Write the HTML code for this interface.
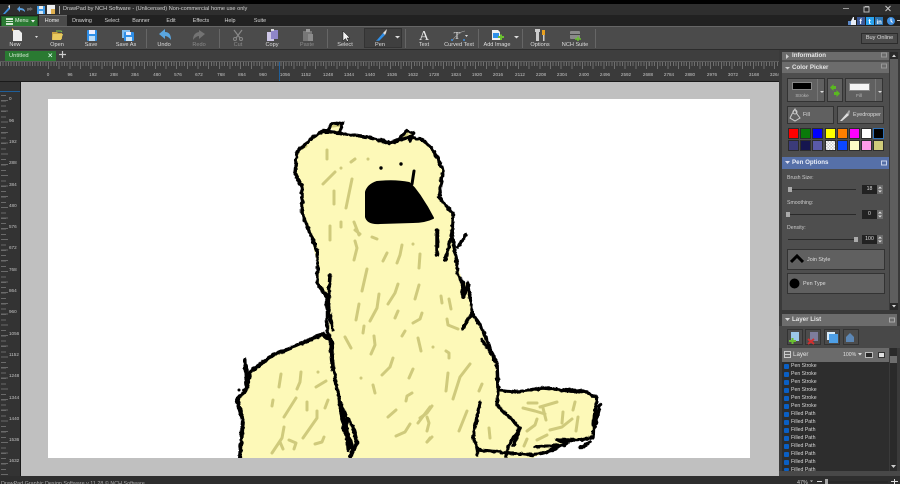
<!DOCTYPE html>
<html><head><meta charset="utf-8"><title>DrawPad</title>
<style>
html,body{margin:0;padding:0;background:#3a3a3a}
#a{position:relative;width:900px;height:484px;overflow:hidden;background:#3a3a3a;font-family:"Liberation Sans",sans-serif;color:#ddd;filter:blur(.25px)}
#a div,#a span,#a svg{position:absolute}
.c{transform:translateX(-50%);white-space:nowrap;line-height:8px;height:8px}
.n{white-space:nowrap;line-height:8px;height:8px}
.m{font-size:5.4px;top:17px;color:#d5d5d5}
.l{font-size:5.6px;top:41px;color:#ddd}
.d{color:#8a8a8a}
.r{font-size:4.6px;top:71px;color:#c4c4c4}
.v{font-size:4.6px;left:9px;color:#c4c4c4}
.sep{top:29px;width:1px;height:19px;background:#666}
.h{left:782px;width:107px;background:#6c6c6c;color:#e4e4e4;font-weight:bold;font-size:6.2px}
.h b{position:absolute;left:10px;top:2px;line-height:8px;white-space:nowrap}
.btn{background:#606060;border:1px solid #333;box-sizing:border-box}
.sw{width:9px;height:9px;border:1px solid #2c2c2c}
.cb{left:784px;width:5px;height:5px;background:#0a5fc4;border-radius:1px}
.rw{left:791px;font-size:5.2px;color:#d8d8d8}
.box{left:862px;width:15px;height:9px;background:#222;color:#ddd;font-size:5.2px;text-align:center;line-height:9px}
.sp{left:877px;width:6px;height:9px;background:#6a6a6a}
.lb{left:787px;font-size:5.2px;color:#ccc}
.tr{left:788px;width:68px;height:1px;background:#2a2a2a}
.th{width:4px;height:5px;background:#aaa}
.ic{width:16px;height:16px;top:329px;background:#4c4c4c;border:1px solid #333;box-sizing:border-box}
</style></head><body><div id="a">

<!-- title -->
<div style="left:0;top:0;width:900px;height:4px;background:#000"></div>
<div style="left:0;top:4px;width:900px;height:11px;background:#2e2e2e"></div>
<div style="left:0;top:15px;width:900px;height:11px;background:#212121"></div>
<svg style="left:0;top:4px" width="62" height="11" viewBox="0 0 62 11">
<path d="M3 10 L9 3 L10 5 L5 10Z" fill="#3f8fe0"/><path d="M8 2 L10 1 L10 5Z" fill="#ddd"/>
<path d="M17 5 L20 2 L20 4 Q25 4 25 8 Q23 6 20 6 L20 8Z" fill="#5aa0e0"/>
<path d="M33 5 L30 3 L30 4 L27 4 L27 7 L30 6 L30 7Z" fill="#666"/>
<rect x="37" y="2" width="8" height="8" fill="#3f9be8"/><rect x="39" y="2" width="4" height="3" fill="#eee"/><rect x="39" y="7" width="4" height="3" fill="#cfe4f7"/>
<rect x="47" y="1" width="8" height="9" fill="#eee"/><rect x="51" y="5" width="4" height="5" fill="#e0b050"/>
<rect x="59" y="2" width="1" height="8" fill="#aaa"/>
</svg>
<div class="n" style="left:63px;top:5px;font-size:5.6px;color:#d0d0d0;line-height:9px;height:9px">DrawPad by NCH Software - (Unlicensed) Non-commercial home use only</div>
<svg style="left:838px;top:4px" width="62" height="11" viewBox="0 0 62 11">
<rect x="5" y="4" width="6" height="1" fill="#999"/><rect x="26" y="3" width="5" height="5" fill="none" stroke="#bbb"/><rect x="27" y="2" width="4" height="1" fill="#bbb"/>
<path d="M47.500 2 L52.500 7 M52.500 2 L47.500 7" stroke="#ccc" stroke-width="1"/></svg>

<!-- menu -->
<div style="left:1px;top:16px;width:37px;height:11px;background:#2a7a32;border:1px solid #1f5a25;box-sizing:border-box"></div>
<svg style="left:6px;top:18px" width="7" height="7"><rect width="7" height="7" fill="#cfe8cf"/><path d="M0 2.500H7M0 4.500H7" stroke="#2a7a32"/></svg>
<div class="n" style="left:15px;top:17px;font-size:5.400px;color:#e6f2e6">Menu</div>
<svg style="left:31px;top:20px" width="4" height="3"><path d="M0 0H4L2 2.500Z" fill="#eee"/></svg>
<div style="left:39px;top:15px;width:28px;height:12px;background:#4b4b4b;border-top:1px solid #6a6a6a;box-sizing:border-box"></div>
<div class="c m" style="left:52px;color:#eee">Home</div>
<div class="c m" style="left:82px">Drawing</div>
<div class="c m" style="left:112px">Select</div>
<div class="c m" style="left:141px">Banner</div>
<div class="c m" style="left:171px">Edit</div>
<div class="c m" style="left:201px">Effects</div>
<div class="c m" style="left:230px">Help</div>
<div class="c m" style="left:260px">Suite</div>
<svg style="left:846px;top:15px" width="54" height="11" viewBox="0 0 54 11">
<rect x="2" y="6" width="5" height="4" fill="#5b88c9"/><path d="M5 10V6L7 2H8V5H10V10Z" fill="#e8eef8"/>
<rect x="11" y="2" width="8" height="8" fill="#3b5998"/><rect x="20" y="2" width="8" height="8" fill="#2aa3ef"/><rect x="29" y="2" width="8" height="8" fill="#2a74b3"/>
<text x="13.500" y="9" font-size="7" fill="#fff" font-family="Liberation Sans" font-weight="bold">f</text>
<text x="22.500" y="9" font-size="7" fill="#fff" font-family="Liberation Sans" font-weight="bold">t</text>
<text x="30.500" y="9" font-size="6" fill="#fff" font-family="Liberation Sans" font-weight="bold">in</text>
<circle cx="45" cy="6" r="4" fill="#3f8fe0"/><path d="M45 3.500V6L46.500 7.500" stroke="#fff" fill="none"/><rect x="51" y="5" width="3" height="1" fill="#ccc"/></svg>

<!-- toolbar -->
<div style="left:0;top:26px;width:900px;height:1px;background:#666"></div>
<div style="left:0;top:27px;width:900px;height:23px;background:#4b4b4b"></div>
<div style="left:0;top:49px;width:900px;height:1px;background:#2c2c2c"></div>
<div style="left:364px;top:28px;width:38px;height:20px;background:#3f3f3f;border:1px solid #333;box-sizing:border-box"></div>
<div class="sep" style="left:146px"></div><div class="sep" style="left:219px"></div><div class="sep" style="left:327px"></div><div class="sep" style="left:405px"></div><div class="sep" style="left:478px"></div><div class="sep" style="left:522px"></div><div class="sep" style="left:595px"></div>
<svg style="left:0;top:27px" width="600" height="15" viewBox="0 0 600 15">
<path d="M13 3H19L22 6V14H13Z" fill="#eee"/><path d="M12 1L14 3L12 4Z" fill="#e8b850"/><path d="M35 9H38L36.500 11Z" fill="#ddd"/>
<path d="M52 5H57L58 6H62V12H52Z" fill="#c8a440"/><path d="M53 7H63L61 13H52Z" fill="#e8cb60"/><path d="M56 4H61L62 5" stroke="#7cc04a" fill="none"/>
<rect x="87" y="3" width="10" height="11" rx="1" fill="#2f8fe8"/><rect x="89" y="3" width="6" height="4" fill="#eef"/><rect x="89" y="9" width="6" height="5" fill="#bcdcf8"/>
<rect x="122" y="3" width="8" height="8" fill="#7fbdf0"/><rect x="124" y="5" width="10" height="9" rx="1" fill="#2f8fe8"/><rect x="126" y="5" width="5" height="3" fill="#eef"/><rect x="126" y="10" width="6" height="4" fill="#d0e8fb"/>
<path d="M159 7L165 2V5Q171 5 171 13Q168 9 165 9V12Z" fill="#5aa6e0"/>
<path d="M205 7L199 3V5Q193 6 193 13Q196 9 199 9V12Z" fill="#737373"/>
<path d="M234 3L240 11M242 3L236 11" stroke="#888" stroke-width="1.200"/><circle cx="235" cy="12" r="1.500" fill="none" stroke="#888"/><circle cx="241" cy="12" r="1.500" fill="none" stroke="#888"/>
<rect x="267" y="5" width="7" height="9" fill="#cfc8e8"/><rect x="271" y="3" width="7" height="9" fill="#8f86c9"/><rect x="271" y="2" width="3" height="2" fill="#ddd"/>
<rect x="303" y="4" width="9" height="10" fill="#777"/><rect x="306" y="2" width="4" height="3" fill="#999"/><rect x="308" y="7" width="5" height="7" fill="#8c8c8c"/>
<path d="M343 4V14L345.500 11.500L347 14.500L348.500 13.500L347 11H350Z" fill="#f2f2f2" stroke="#111" stroke-width=".5"/>
<path d="M377 13L383 6L385 8L379 14Z" fill="#2f8fe8"/><path d="M383 6L386 3L387 2L386 6L385 8Z" fill="#ddd"/><path d="M376 14L377 13L378 14Z" fill="#2f8fe8"/>
<text x="424" y="13" text-anchor="middle" font-family="Liberation Serif" font-size="14" fill="#e8e8e8">A</text>
<text x="457" y="12" text-anchor="middle" font-family="Liberation Serif" font-size="11" fill="#ddd">T</text><path d="M452 14Q458 5 465 4" stroke="#aaa" fill="none" stroke-width=".6"/><circle cx="452" cy="13" r="1" fill="#3f8fe0"/><circle cx="464" cy="13" r="1" fill="#3f8fe0"/><path d="M465 8H468L466.500 10Z" fill="#ddd"/>
<path d="M492 3H498L500 5V13H492Z" fill="#f0f0f0"/><rect x="493" y="6" width="6" height="5" fill="#2f8fe8"/><path d="M498 10H504M501 7.500V13" stroke="#6ac030" stroke-width="2"/>
<rect x="536" y="3" width="3" height="11" fill="#ccc"/><rect x="535" y="2" width="5" height="3" fill="#ccc"/><rect x="542" y="3" width="3" height="5" fill="#e8a020"/><rect x="543" y="8" width="1.500" height="6" fill="#ccc"/>
<rect x="570" y="4" width="10" height="8" rx="1" fill="#8a8a8a"/><rect x="570" y="7" width="10" height="1" fill="#444"/><path d="M575 12H581M578 9.500V14" stroke="#6ac030" stroke-width="1.500"/>
</svg>
<svg style="left:395px;top:36px" width="5" height="3"><path d="M0 0H5L2.500 2.500Z" fill="#ddd"/></svg>
<svg style="left:514px;top:36px" width="5" height="3"><path d="M0 0H5L2.500 2.500Z" fill="#ddd"/></svg>
<div class="c l" style="left:15px">New</div><div class="c l" style="left:57px">Open</div><div class="c l" style="left:91px">Save</div><div class="c l" style="left:126px">Save As</div><div class="c l" style="left:164px">Undo</div><div class="c l d" style="left:199px">Redo</div><div class="c l d" style="left:238px">Cut</div><div class="c l" style="left:272px">Copy</div><div class="c l d" style="left:307px">Paste</div><div class="c l" style="left:345px">Select</div><div class="c l" style="left:380px">Pen</div><div class="c l" style="left:424px">Text</div><div class="c l" style="left:459px">Curved Text</div><div class="c l" style="left:497px">Add Image</div><div class="c l" style="left:540px">Options</div><div class="c l" style="left:575px">NCH Suite</div>
<div class="btn" style="left:861px;top:33px;width:37px;height:11px;background:#4b4b4b;border-color:#2c2c2c;font-size:5.600px;text-align:center;line-height:9px;color:#ddd">Buy Online</div>

<!-- doc tabs -->
<div style="left:0;top:50px;width:779px;height:11px;background:#3e3e3e"></div>
<div style="left:5px;top:51px;width:51px;height:10px;background:#2a7a32"></div>
<div class="n" style="left:9px;top:51.500px;font-size:5.800px;color:#cfe6cf">Untitled</div>
<svg style="left:48px;top:53px" width="5" height="5"><path d="M.5 .5L4 4M4 .5L.5 4" stroke="#dfe" stroke-width=".8"/></svg>
<svg style="left:59px;top:51px" width="7" height="7"><path d="M3.500 0V7M0 3.500H7" stroke="#ccc" stroke-width="1.200"/></svg>

<!-- rulers -->
<div style="left:0;top:61px;width:779px;height:20px;background:#3a3a3a;border-top:1px solid #5c5c5c;box-sizing:border-box"></div>
<div style="left:0;top:81px;width:779px;height:1px;background:#1a1a1a"></div>
<div style="left:48px;top:62px;width:731px;height:4px;background:repeating-linear-gradient(90deg,#6e6e6e 0 1px,transparent 1px 2.670px)"></div>
<div style="left:48px;top:66px;width:731px;height:3px;background:repeating-linear-gradient(90deg,#6e6e6e 0 1px,transparent 1px 10.680px)"></div>
<div style="left:0;top:62px;width:48px;height:4px;background:repeating-linear-gradient(90deg,#6e6e6e 0 1px,transparent 1px 2.670px)"></div>
<div style="left:279px;top:62px;width:1px;height:19px;background:#1f5f9a"></div>
<div class="c r" style="left:48px">0</div><div class="c r" style="left:70px">96</div><div class="c r" style="left:93px">192</div><div class="c r" style="left:114px">288</div><div class="c r" style="left:135px">384</div><div class="c r" style="left:157px">480</div><div class="c r" style="left:178px">576</div><div class="c r" style="left:199px">672</div><div class="c r" style="left:221px">768</div><div class="c r" style="left:242px">864</div><div class="c r" style="left:263px">960</div><div class="c r" style="left:285px">1056</div><div class="c r" style="left:306px">1152</div><div class="c r" style="left:328px">1248</div><div class="c r" style="left:349px">1344</div><div class="c r" style="left:370px">1440</div><div class="c r" style="left:392px">1536</div><div class="c r" style="left:413px">1632</div><div class="c r" style="left:434px">1728</div><div class="c r" style="left:456px">1824</div><div class="c r" style="left:477px">1920</div><div class="c r" style="left:498px">2016</div><div class="c r" style="left:520px">2112</div><div class="c r" style="left:541px">2208</div><div class="c r" style="left:562px">2304</div><div class="c r" style="left:584px">2400</div><div class="c r" style="left:605px">2496</div><div class="c r" style="left:626px">2592</div><div class="c r" style="left:648px">2688</div><div class="c r" style="left:669px">2784</div><div class="c r" style="left:690px">2880</div><div class="c r" style="left:712px">2976</div><div class="c r" style="left:733px">3072</div><div class="c r" style="left:754px">3168</div><div class="c r" style="left:775px">3264</div>

<div style="left:0;top:82px;width:20px;height:394px;background:#333"></div>
<div style="left:20px;top:82px;width:1px;height:394px;background:#1a1a1a"></div>
<div style="left:1px;top:95px;width:5px;height:381px;background:repeating-linear-gradient(180deg,#6a6a6a 0 1px,transparent 1px 5.340px)"></div>
<div style="left:1px;top:100px;width:7px;height:376px;background:repeating-linear-gradient(180deg,#6a6a6a 0 1px,transparent 1px 10.680px)"></div>
<div style="left:0;top:91px;width:20px;height:1px;background:#1f5f9a"></div>
<div class="v" style="top:96px">0</div><div class="v" style="top:118px">96</div><div class="v" style="top:139px">192</div><div class="v" style="top:160px">288</div><div class="v" style="top:182px">384</div><div class="v" style="top:203px">480</div><div class="v" style="top:224px">576</div><div class="v" style="top:245px">672</div><div class="v" style="top:267px">768</div><div class="v" style="top:288px">864</div><div class="v" style="top:309px">960</div><div class="v" style="top:331px">1056</div><div class="v" style="top:352px">1152</div><div class="v" style="top:373px">1248</div><div class="v" style="top:395px">1344</div><div class="v" style="top:416px">1440</div><div class="v" style="top:437px">1536</div><div class="v" style="top:458px">1632</div>

<!-- canvas -->
<div style="left:21px;top:82px;width:758px;height:394px;background:#c0c0c0"></div>
<div style="left:48px;top:99px;width:702px;height:359px;background:#fff"></div>

<svg style="left:48px;top:99px" width="702" height="359" viewBox="48 99 702 359" fill="none" stroke-linecap="round" stroke-linejoin="round">
<defs><filter id="j" filterUnits="userSpaceOnUse" x="48" y="99" width="702" height="359"><feTurbulence type="fractalNoise" baseFrequency=".22" numOctaves="2" seed="4"/><feDisplacementMap in="SourceGraphic" scale="3.500" xChannelSelector="R" yChannelSelector="G"/></filter></defs>
<path fill="#fdf9b8" d="M297 152L313 137L323 131L340 133L367 137L390 143L410 137L423 140L437 157L443 170L440 197L453 213L452 233L457 263L463 283L468 283L472 313L483 330L497 363L498 390L517 392L543 388L587 392L597 398L593 437L580 440L567 443L547 452L533 458L240 458L243 420L237 400L247 388L250 372L273 355L293 347L323 334L330 338L327 300L317 283L318 267L310 233L302 213L302 187L295 173Z"/>
<path fill="#fdf9b8" d="M328 128L333 123L343 123L340 133ZM395 142L407 131L413 133L410 140Z"/>
<g stroke="#cfca7c" stroke-width="3">
<path d="M327 150V159M351 162L355 159M368 159V159.100M323 184L335 172M341 168V168.100M352 179L346 208M334 191V204M330 226V240M341 222V227M354 222L359 235M372 237L377 239M355 230L360 234"/>
<path d="M355 241L357 248L354 260M387 253L383 261M402 245L400 255L397 263M413 244V244.100M420 254L419 268M367 269L362 291M398 284L395 293L388 304M419 285L415 299M379 294L377 308L370 321M359 304L356 320M441 296L442 303M449 299L451 309M398 311L395 318M422 313L420 319L413 323M447 319L448 325L458 329M364 326L363 333M405 331L402 336M345 337L351 348M374 336L375 345L371 354M418 338L421 351M433 347V347.100M446 351L449 353L449 358"/>
<path d="M281 374L279 387M301 372L300 382L297 389M318 372V372.100M326 381L316 387M296 398L284 417M273 400L272 406M307 402L307 410M328 400L325 408M317 411L317 418L303 438M284 427L282 438L272 453M280 442L283 449M289 440L296 443L294 449M324 437L322 442L315 444"/>
<path d="M393 358L390 367L382 375M413 369L409 378M361 378V378.100M373 385L375 393M412 393L407 396L406 401M396 410L388 417M430 407L418 423M410 424L405 432L396 436M430 438L427 442"/>
<path d="M470 364L460 377L453 399M448 373L446 391M482 384L479 391M432 406L427 413L420 418M427 417L429 423L427 431M467 411L459 431M432 437L427 442M489 428L490 438"/>
<path d="M528 403L537 403M523 408L535 411L545 414M540 407L557 402M543 408L546 420M537 419L535 425L527 431M575 402L573 410M563 412L562 423M578 417L576 431M572 419L562 427L550 430M547 435L537 440M527 439L524 446"/>
<path d="M302 148L306 146M333 126L340 125M399 140L407 134"/>
</g>
<path fill="#000" stroke="#000" stroke-width="2" d="M366 192Q368 185 377 182Q395 180 409 183L414 188L420 196L427 207L433 218Q425 222 413 222L380 223Q368 224 366 217Z"/>
<path d="M414 171L412 184" stroke="#000" stroke-width="3"/>
<circle cx="381" cy="168" r="1.700" fill="#000"/><circle cx="401" cy="164" r="1.700" fill="#000"/>
<g filter="url(#j)">
<g stroke="#000" stroke-width="3.500">
<path d="M295 173L297 152L313 137L323 131L340 133L367 137L390 143L410 137L423 140L433 150L437 157L443 170L441 183L439 197L447 207L453 213L452 233"/>
<path d="M295 173L302 187L302 213L310 233L317 250L318 267L317 283L327 297L327 330L332 342L333 360"/>
<path d="M330 275L328 307L333 330"/>
<path d="M328 131L331 124L343 123L340 132M395 142L407 131L413 133L410 140"/>
<path d="M437 230L437 255M452 233L445 260M452 233L457 263L457 273L463 283L463 297L468 283L472 313L483 330L495 360M466 235L458 247M463 328L472 313"/>
<path d="M482 340L490 352L497 363L498 390L497 405L502 410L520 428L512 440L508 447L506 457"/>
<path d="M333 360L334 372L340 403L344 412L353 427"/>
<path d="M498 390L517 392L543 388L587 392L597 398L594 420L593 437L580 440L557 440L567 443L547 452L533 455L478 450L473 437L480 402M477 450V455M535 447L565 445M600 405L595 427M580 448L590 442M520 428L514 445"/>
</g>
<g stroke="#000" stroke-width="4">
<path d="M240 457L243 420L237 400L247 388L245 360M247 388L250 372L273 355L293 347L323 334L330 340L333 370"/>
<path d="M353 427L357 443L350 457M346 420L348 450"/>
</g>
<path d="M340 403L345 430L352 448" stroke="#000" stroke-width="5"/>
</g>
<circle cx="239" cy="390" r="1.500" fill="#000"/>
</svg>

<!-- status -->
<div style="left:0;top:476px;width:900px;height:8px;background:#2e2e2e"></div>
<div class="n" style="left:1px;top:480px;font-size:5.400px;color:#aaa">DrawPad Graphic Design Software v 11.28 © NCH Software</div>
<div class="n" style="left:797px;top:479px;font-size:5.400px;color:#ccc">47%</div>
<svg style="left:810px;top:479px" width="90" height="5"><path d="M0 1.500H3L1.500 3Z" fill="#ccc"/><path d="M7 2.500H12" stroke="#ddd"/><path d="M14 3H78" stroke="#222"/><rect x="15" y="0" width="3" height="5" fill="#aaa"/><path d="M81 2.500H88M84.500 0V5" stroke="#ddd"/></svg>

<!-- right panel -->
<div style="left:779px;top:50px;width:121px;height:426px;background:#3a3a3a"></div>
<div style="left:782px;top:60px;width:107px;height:250px;background:#4e4e4e"></div>
<div class="h" style="top:52px;height:8px"><b style="top:0">Information</b></div>
<div class="h" style="top:62px;height:11px"><b>Color Picker</b></div>
<svg style="left:785px;top:53px" width="5" height="20"><path d="M1 1L4 3.500L1 6Z" fill="#ccc"/><path d="M0 14H5L2.500 16.500Z" fill="#ccc"/></svg>
<svg style="left:881px;top:52px" width="7" height="20"><rect x=".5" y="1" width="5" height="4" fill="none" stroke="#999"/><rect x=".5" y="12" width="5" height="4" fill="none" stroke="#999"/></svg>
<div style="left:890px;top:52px;width:8px;height:258px;background:#5e5e5e"></div>
<div style="left:890px;top:52px;width:8px;height:7px;background:#2a2a2a"></div>
<div style="left:890px;top:303px;width:8px;height:7px;background:#2a2a2a"></div>
<svg style="left:892px;top:54px" width="4" height="254"><path d="M0 3L2 .5L4 3Z" fill="#ddd"/><path d="M0 251L2 253.500L4 251Z" fill="#ddd"/></svg>

<div class="btn" style="left:787px;top:78px;width:38px;height:24px"></div>
<div style="left:792px;top:82px;width:20px;height:8px;background:#000;border:1px solid #888;box-sizing:border-box"></div>
<div class="c" style="left:802px;top:92px;font-size:4.600px;color:#bbb">Stroke</div>
<svg style="left:817px;top:79px" width="8" height="22"><path d="M.5 0V22" stroke="#777"/><path d="M3 12H7L5 14Z" fill="#ddd"/></svg>
<div class="btn" style="left:827px;top:78px;width:16px;height:24px"></div>
<svg style="left:830px;top:84px" width="11" height="13"><path d="M0 3.500L3.500 0V2H6V5H3.500V7Z" fill="#5ab820"/><path d="M10 9.500L6.500 6V8H4V11H6.500V13Z" fill="#5ab820"/></svg>
<div class="btn" style="left:845px;top:78px;width:38px;height:24px"></div>
<div style="left:849px;top:83px;width:21px;height:8px;background:#f4f4f4;border:1px solid #888;box-sizing:border-box"></div>
<div class="c" style="left:859px;top:92px;font-size:4.600px;color:#bbb">Fill</div>
<svg style="left:875px;top:79px" width="8" height="22"><path d="M.5 0V22" stroke="#777"/><path d="M3 12H7L5 14Z" fill="#ddd"/></svg>

<div class="btn" style="left:787px;top:106px;width:47px;height:18px"></div>
<svg style="left:789px;top:108px" width="14" height="14"><path d="M6 1L3 6L1 10L6 13L11 10L8 6Z" fill="none" stroke="#ccc"/><circle cx="6" cy="4" r="2" fill="none" stroke="#ccc"/></svg>
<div class="n" style="left:803px;top:111px;font-size:5.400px;color:#ddd">Fill</div>
<div class="btn" style="left:837px;top:106px;width:47px;height:18px"></div>
<svg style="left:839px;top:108px" width="12" height="14"><path d="M1 13L8 5L10 7L3 13Z" fill="#ddd"/><path d="M8 5L10 2L11 3L10 7Z" fill="#aaa"/></svg>
<div class="n" style="left:853px;top:111px;font-size:5.400px;color:#ddd">Eyedropper</div>

<div class="sw" style="left:788px;top:128px;background:#f00"></div><div class="sw" style="left:800px;top:128px;background:#0a7a0a"></div><div class="sw" style="left:812px;top:128px;background:#00f"></div><div class="sw" style="left:825px;top:128px;background:#ff0"></div><div class="sw" style="left:837px;top:128px;background:#ff7f00"></div><div class="sw" style="left:849px;top:128px;background:#f0f"></div><div class="sw" style="left:861px;top:128px;background:#fff"></div><div class="sw" style="left:873px;top:128px;background:#000;border-color:#2d6fb5"></div>
<div class="sw" style="left:788px;top:140px;background:#3b3b7a"></div><div class="sw" style="left:800px;top:140px;background:#15154f"></div><div class="sw" style="left:812px;top:140px;background:#5a5aa8"></div><div class="sw" style="left:825px;top:140px;background:repeating-conic-gradient(#ccc 0 25%,#fff 0 50%) 0 0/3px 3px"></div><div class="sw" style="left:837px;top:140px;background:#0b46ff"></div><div class="sw" style="left:849px;top:140px;background:#fdfcc8"></div><div class="sw" style="left:861px;top:140px;background:#ff9ce8"></div><div class="sw" style="left:873px;top:140px;background:#cfcb7a"></div>

<div class="h" style="top:157px;height:12px;background:#5670a8"><b style="color:#e8edf8">Pen Options</b></div>
<svg style="left:785px;top:161px" width="5" height="4"><path d="M0 0H5L2.500 3Z" fill="#dde"/></svg>
<svg style="left:881px;top:160px" width="7" height="6"><rect x=".5" y="1" width="5" height="4" fill="none" stroke="#c8d2ea"/></svg>

<div class="n lb" style="top:174px">Brush Size:</div>
<div class="tr" style="top:189px"></div><div class="th" style="left:788px;top:187px"></div>
<div class="box" style="top:185px">18</div><div class="sp" style="top:185px"></div>
<svg style="left:878px;top:186px" width="4" height="7"><path d="M0 2.500L2 .5L4 2.500ZM0 4.500L2 6.500L4 4.500Z" fill="#ddd"/></svg>
<div class="n lb" style="top:199px">Smoothing:</div>
<div class="tr" style="top:214px"></div><div class="th" style="left:786px;top:212px"></div>
<div class="box" style="top:210px">0</div><div class="sp" style="top:210px"></div>
<svg style="left:878px;top:211px" width="4" height="7"><path d="M0 2.500L2 .5L4 2.500ZM0 4.500L2 6.500L4 4.500Z" fill="#ddd"/></svg>
<div class="n lb" style="top:224px">Density:</div>
<div class="tr" style="top:239px"></div><div class="th" style="left:854px;top:237px"></div>
<div class="box" style="top:235px">100</div><div class="sp" style="top:235px"></div>
<svg style="left:878px;top:236px" width="4" height="7"><path d="M0 2.500L2 .5L4 2.500ZM0 4.500L2 6.500L4 4.500Z" fill="#ddd"/></svg>

<div class="btn" style="left:787px;top:249px;width:98px;height:21px"></div>
<svg style="left:790px;top:254px" width="14" height="10"><path d="M1 8L7 2L13 8" fill="none" stroke="#000" stroke-width="3"/></svg>
<div class="n" style="left:807px;top:256px;font-size:5.400px;color:#ddd">Join Style</div>
<div class="btn" style="left:787px;top:273px;width:98px;height:21px"></div>
<svg style="left:789px;top:278px" width="11" height="11"><circle cx="5.500" cy="5.500" r="5" fill="#000"/></svg>
<div class="n" style="left:803px;top:280px;font-size:5.400px;color:#ddd">Pen Type</div>

<div style="left:779px;top:326px;width:121px;height:22px;background:#484848"></div>
<div style="left:779px;top:471px;width:121px;height:5px;background:#484848"></div>
<div class="h" style="top:314px;height:12px;width:115px"><b>Layer List</b></div>
<svg style="left:785px;top:318px" width="5" height="4"><path d="M0 0H5L2.500 3Z" fill="#ddd"/></svg>
<svg style="left:889px;top:317px" width="7" height="6"><rect x=".5" y="1" width="5" height="4" fill="none" stroke="#aaa"/></svg>
<div class="ic" style="left:787px"></div><div class="ic" style="left:805px"></div><div class="ic" style="left:824px"></div><div class="ic" style="left:843px"></div>
<svg style="left:787px;top:330px" width="72" height="15"><rect x="4" y="2" width="8" height="9" fill="#9cc8ea"/><path d="M2 11H9M5.500 8V14" stroke="#6ac030" stroke-width="2"/><rect x="23" y="2" width="8" height="9" fill="#7d7d9c"/><path d="M21 9L27 14M27 9L21 14" stroke="#d03030" stroke-width="2"/><rect x="40" y="2" width="8" height="8" fill="#d8ecfb"/><rect x="42" y="4" width="9" height="9" fill="#4e9fe6"/><path d="M59 7L63 3L67 7V12H59Z" fill="#5c87b5"/></svg>

<div class="h" style="top:348px;height:14px;background:#6b6b6b;font-weight:normal"><b style="top:3px;font-weight:normal;left:11px">Layer</b></div>
<svg style="left:784px;top:351px" width="7" height="7"><rect x=".5" y=".5" width="6" height="6" fill="none" stroke="#ccc"/><path d="M1 3.500H6" stroke="#ccc"/></svg>
<div class="n" style="left:843px;top:351px;font-size:5.200px;color:#e0e0e0">100%</div>
<svg style="left:858px;top:353px" width="4" height="3"><path d="M0 0H4L2 2.500Z" fill="#ddd"/></svg>
<div style="left:865px;top:352px;width:8px;height:6px;background:#2a2a2a;border:1px solid #bbb;box-sizing:border-box"></div>
<div style="left:878px;top:352px;width:7px;height:6px;background:#e0e0e0;border:1px solid #333;box-sizing:border-box"></div>
<div style="left:782px;top:362px;width:107px;height:109px;background:#2d2d2d;overflow:hidden"></div>
<div style="left:890px;top:348px;width:7px;height:123px;background:#2a2a2a"></div>
<div style="left:890px;top:356px;width:7px;height:7px;background:#6e6e6e"></div>
<svg style="left:891px;top:465px" width="5" height="4"><path d="M0 0H5L2.500 3Z" fill="#ccc"/></svg>

<div class="cb" style="top:364px"></div><div class="n rw" style="top:362px">Pen Stroke</div>
<div class="cb" style="top:372px"></div><div class="n rw" style="top:370px">Pen Stroke</div>
<div class="cb" style="top:380px"></div><div class="n rw" style="top:378px">Pen Stroke</div>
<div class="cb" style="top:388px"></div><div class="n rw" style="top:386px">Pen Stroke</div>
<div class="cb" style="top:396px"></div><div class="n rw" style="top:394px">Pen Stroke</div>
<div class="cb" style="top:404px"></div><div class="n rw" style="top:402px">Pen Stroke</div>
<div class="cb" style="top:412px"></div><div class="n rw" style="top:410px">Filled Path</div>
<div class="cb" style="top:420px"></div><div class="n rw" style="top:418px">Filled Path</div>
<div class="cb" style="top:428px"></div><div class="n rw" style="top:426px">Filled Path</div>
<div class="cb" style="top:436px"></div><div class="n rw" style="top:434px">Filled Path</div>
<div class="cb" style="top:444px"></div><div class="n rw" style="top:442px">Filled Path</div>
<div class="cb" style="top:452px"></div><div class="n rw" style="top:450px">Filled Path</div>
<div class="cb" style="top:460px"></div><div class="n rw" style="top:458px">Filled Path</div>
<div class="cb" style="top:468px;height:3px"></div><div class="n rw" style="top:466px;height:5px;overflow:hidden">Filled Path</div>

</div></body></html>
